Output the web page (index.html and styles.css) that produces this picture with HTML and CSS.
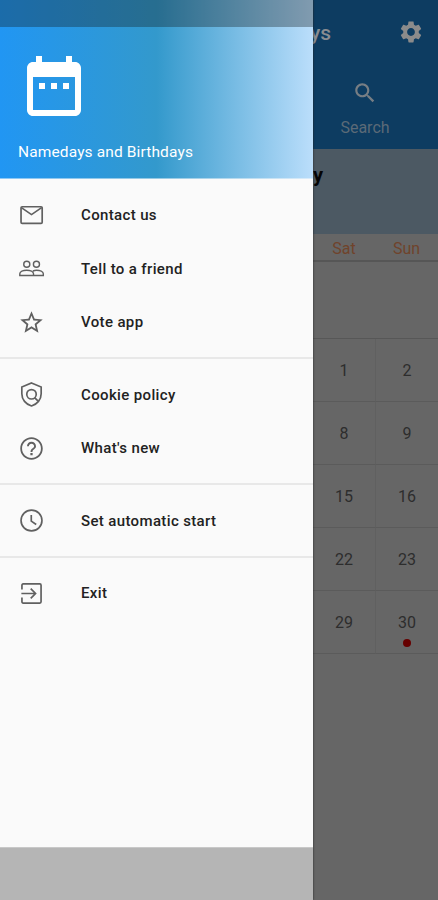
FILE: index.html
```html
<!DOCTYPE html>
<html lang="en">
<head>
<meta charset="utf-8">
<title>Namedays and Birthdays</title>
<link rel="stylesheet" href="styles.css">
</head>
<body>
<div class="screen">
  <aside class="drawer">
    <div class="status"></div>
    <header class="brand">
      <svg class="logo" viewBox="0 0 24 24"><path d="M9 11H7v2h2v-2zm4 0h-2v2h2v-2zm4 0h-2v2h2v-2zm2-7h-1V2h-2v2H8V2H6v2H5c-1.110 0-1.990.9-1.990 2L3 20c0 1.100.89 2 2 2h14c1.100 0 2-.9 2-2V6c0-1.100-.9-2-2-2zm0 16H5V9h14v11z"/></svg>
      <div class="name">Namedays and Birthdays</div>
    </header>
    <nav class="menu">
      <div class="group">
        <a class="item"><svg viewBox="0 0 24 24"><rect x="2.700" y="4.200" width="18.800" height="14.800" rx="1"/><path d="M3 5l9 6.200 9-6.200"/></svg><span>Contact us</span></a>
        <a class="item"><svg class="thin" viewBox="0 0 24 24"><circle cx="7.800" cy="8.200" r="2.700"/><circle cx="16.400" cy="8.200" r="2.700"/><path d="M1.600 18.200v-1.500c0-2 3-3.200 6.100-3.200s6.100 1.200 6.100 3.200v1.500zM13.200 14.200c1-.4 2.100-.7 3.200-.7 3.100 0 6.100 1.200 6.100 3.200v1.500h-8.700"/></svg><span>Tell to a friend</span></a>
        <a class="item"><svg class="solid star" viewBox="0 0 24 24"><path d="M22 9.240l-7.190-.62L12 2 9.190 8.630 2 9.240l5.460 4.730L5.820 21 12 17.270 18.180 21l-1.630-7.030L22 9.240zM12 15.400l-3.760 2.270 1-4.280-3.320-2.880 4.380-.38L12 6.100l1.710 4.040 4.380.38-3.320 2.880 1 4.280L12 15.400z"/></svg><span>Vote app</span></a>
      </div>
      <div class="group">
        <a class="item"><svg viewBox="0 0 24 24"><path d="M12 1.800l8.600 3.500v6c0 5.100-3.500 9.400-8.600 10.900-5.100-1.500-8.600-5.800-8.600-10.900v-6z"/><circle cx="12" cy="11.800" r="4.200"/><path d="M14.700 14.700l3 3"/></svg><span>Cookie policy</span></a>
        <a class="item"><svg class="solid" viewBox="0 0 24 24"><path d="M11 18h2v-2h-2v2zm1-16C6.480 2 2 6.480 2 12s4.480 10 10 10 10-4.480 10-10S17.520 2 12 2zm0 18.400c-4.600 0-8.400-3.800-8.400-8.400S7.400 3.600 12 3.600s8.400 3.800 8.400 8.400-3.800 8.400-8.400 8.400zM12 6c-2.210 0-4 1.790-4 4h1.700c0-1.200 1-2.300 2.300-2.300s2.300 1.100 2.300 2.300c0 2-3.150 1.750-3.150 5h1.700c0-2.250 3.150-2.500 3.150-5 0-2.210-1.790-4-4-4z"/></svg><span>What's new</span></a>
      </div>
      <div class="group">
        <a class="item"><svg viewBox="0 0 24 24"><circle cx="12" cy="12" r="9.300"/><path d="M11.800 7v5.600l4.400 3"/></svg><span>Set automatic start</span></a>
      </div>
      <div class="group">
        <a class="item"><svg viewBox="0 0 24 24"><path d="M3.500 8.500V4.600c0-.7.400-1.100 1.100-1.100h14.800c.7 0 1.100.4 1.100 1.100v14.800c0 .7-.4 1.100-1.100 1.100H4.600c-.7 0-1.100-.4-1.100-1.100v-3.900M3 12h12.300M11.300 7.700l4.300 4.300-4.300 4.300"/></svg><span>Exit</span></a>
      </div>
    </nav>
    <div class="navbar"></div>
  </aside>
  <main class="app">
    <header class="bar">
      <div class="top"><h1>ys</h1>
        <svg class="gear" viewBox="0 0 24 24"><path d="M19.140 12.940c.04-.3.060-.61.060-.94 0-.32-.02-.64-.07-.94l2.030-1.580c.18-.14.230-.41.120-.61l-1.920-3.320c-.12-.22-.37-.29-.59-.22l-2.390.96c-.5-.38-1.030-.7-1.620-.94l-.36-2.540c-.04-.24-.24-.41-.48-.41h-3.840c-.24 0-.43.170-.47.410l-.36 2.540c-.59.240-1.130.570-1.620.940l-2.390-.96c-.22-.08-.47 0-.59.220L2.740 8.870c-.12.210-.08.470.120.610l2.030 1.580c-.05.300-.09.630-.09.940s.02.640.070.940l-2.030 1.580c-.18.140-.23.410-.12.610l1.920 3.320c.12.220.370.290.590.220l2.390-.96c.5.380 1.030.7 1.620.94l.36 2.540c.05.240.240.410.480.410h3.840c.24 0 .44-.17.470-.41l.36-2.540c.59-.24 1.130-.56 1.620-.94l2.390.96c.22.080.470 0 .59-.22l1.920-3.320c.12-.22.070-.47-.12-.61l-2.010-1.580zM12 15.600c-1.980 0-3.600-1.620-3.600-3.600s1.620-3.600 3.600-3.600 3.600 1.620 3.600 3.600-1.620 3.600-3.600 3.600z"/></svg>
      </div>
      <div class="search">
        <svg viewBox="0 0 24 24"><path d="M15.500 14h-.79l-.28-.27C15.410 12.590 16 11.110 16 9.500 16 5.910 13.090 3 9.500 3S3 5.910 3 9.500 5.910 16 9.500 16c1.610 0 3.090-.59 4.230-1.570l.27.280v.79l5 4.990L20.490 19l-4.990-5zm-6 0C7.010 14 5 11.990 5 9.500S7.010 5 9.500 5 14 7.010 14 9.500 11.990 14 9.500 14z"/></svg>
        <span>Search</span>
      </div>
    </header>
    <section class="today">y</section>
    <div class="days"><span>Sat</span><span>Sun</span></div>
    <div class="blank"></div>
    <div class="grid">
      <div>1</div><div>2</div>
      <div>8</div><div>9</div>
      <div>15</div><div>16</div>
      <div>22</div><div>23</div>
      <div>29</div><div>30<i class="dot"></i></div>
    </div>
  </main>
</div>
</body>
</html>
```
FILE: styles.css
```css
* { box-sizing: border-box; }
body { margin: 0; font-family: Roboto, sans-serif; }
.screen { display: flex; width: 438px; height: 900px; overflow: hidden; background: #666; }

.drawer {
  display: flex; flex-direction: column; width: 313px; flex: none;
  background: linear-gradient(90deg, #2196f3 0, #39c 50%, #bbdefb 100%) 0 0 / 100% 178.500px no-repeat #fafafa;
  box-shadow: 0 0 2px #222; z-index: 1;
}
.status { height: 27px; flex: none; background: rgba(18, 26, 30, .34); }
.brand { height: 151.500px; flex: none; padding: 23px 18px 0; }
.logo { display: block; width: 72px; height: 72px; fill: #fff; }
.name { margin-top: 20px; font-size: 15.500px; line-height: 20px; letter-spacing: .13px; color: #fff; white-space: nowrap; }

.menu { flex: 1; }
.group { padding: 9px 0 8px; border-bottom: 2px solid #e8e8e8; }
.group:first-child { padding: 10px 0 8px; }
.group:last-child { border: 0; }
.item { display: flex; align-items: center; height: 53.500px; padding-left: 18px; }
.item svg { width: 27px; height: 27px; flex: none; fill: none; stroke: #606060; stroke-width: 1.500; }
.item svg.thin { stroke-width: 1.250; }
.item svg.solid { fill: #606060; stroke: none; }
.item span { margin-left: 36px; font-size: 15px; font-weight: 500; letter-spacing: .36px; color: #222; white-space: nowrap; }
.navbar { height: 53px; flex: none; background: #b5b5b5; border-top: 1px solid #c8c8c8; }

.app { flex: 1; min-width: 0; }
.bar { height: 149px; background: #0d3c61; }
.top { display: flex; justify-content: space-between; align-items: center; height: 66px; padding-right: 14px; }
.top h1 { margin: 0 0 0 -3px; font-size: 21px; font-weight: 500; line-height: 24px; color: #898d91; }
.gear { width: 26px; height: 26px; fill: #8b8b8b; margin-top: -3px; }
.search { display: flex; flex-direction: column; align-items: center; padding: 14px 21px 0 0; font-size: 16px; line-height: 20px; color: #5b6a77; }
.search svg { width: 26px; height: 26px; fill: #777e84; margin-bottom: 12px; }
.today { height: 85px; padding-top: 14px; background: #4c5963; font-size: 20px; line-height: 24px; font-weight: 700; color: #050505; }
.days { display: grid; grid-template-columns: 62px 63px; height: 28px; border-bottom: 2px solid #565656; line-height: 29px; text-align: center; font-size: 16px; color: #70432b; }
.blank { height: 76px; }
.grid { display: grid; grid-template-columns: 63px 62px; grid-auto-rows: 63px; border-top: 1px solid #575757; font-size: 16px; color: #2d2d2d; }
.grid div { position: relative; line-height: 64px; text-align: center; border-right: 1px solid #606060; border-bottom: 1px solid #5b5b5b; }
.grid div:nth-child(even) { border-right: 0; }
.dot { position: absolute; left: 27px; bottom: 6px; width: 8px; height: 8px; border-radius: 50%; background: #600; }
```
